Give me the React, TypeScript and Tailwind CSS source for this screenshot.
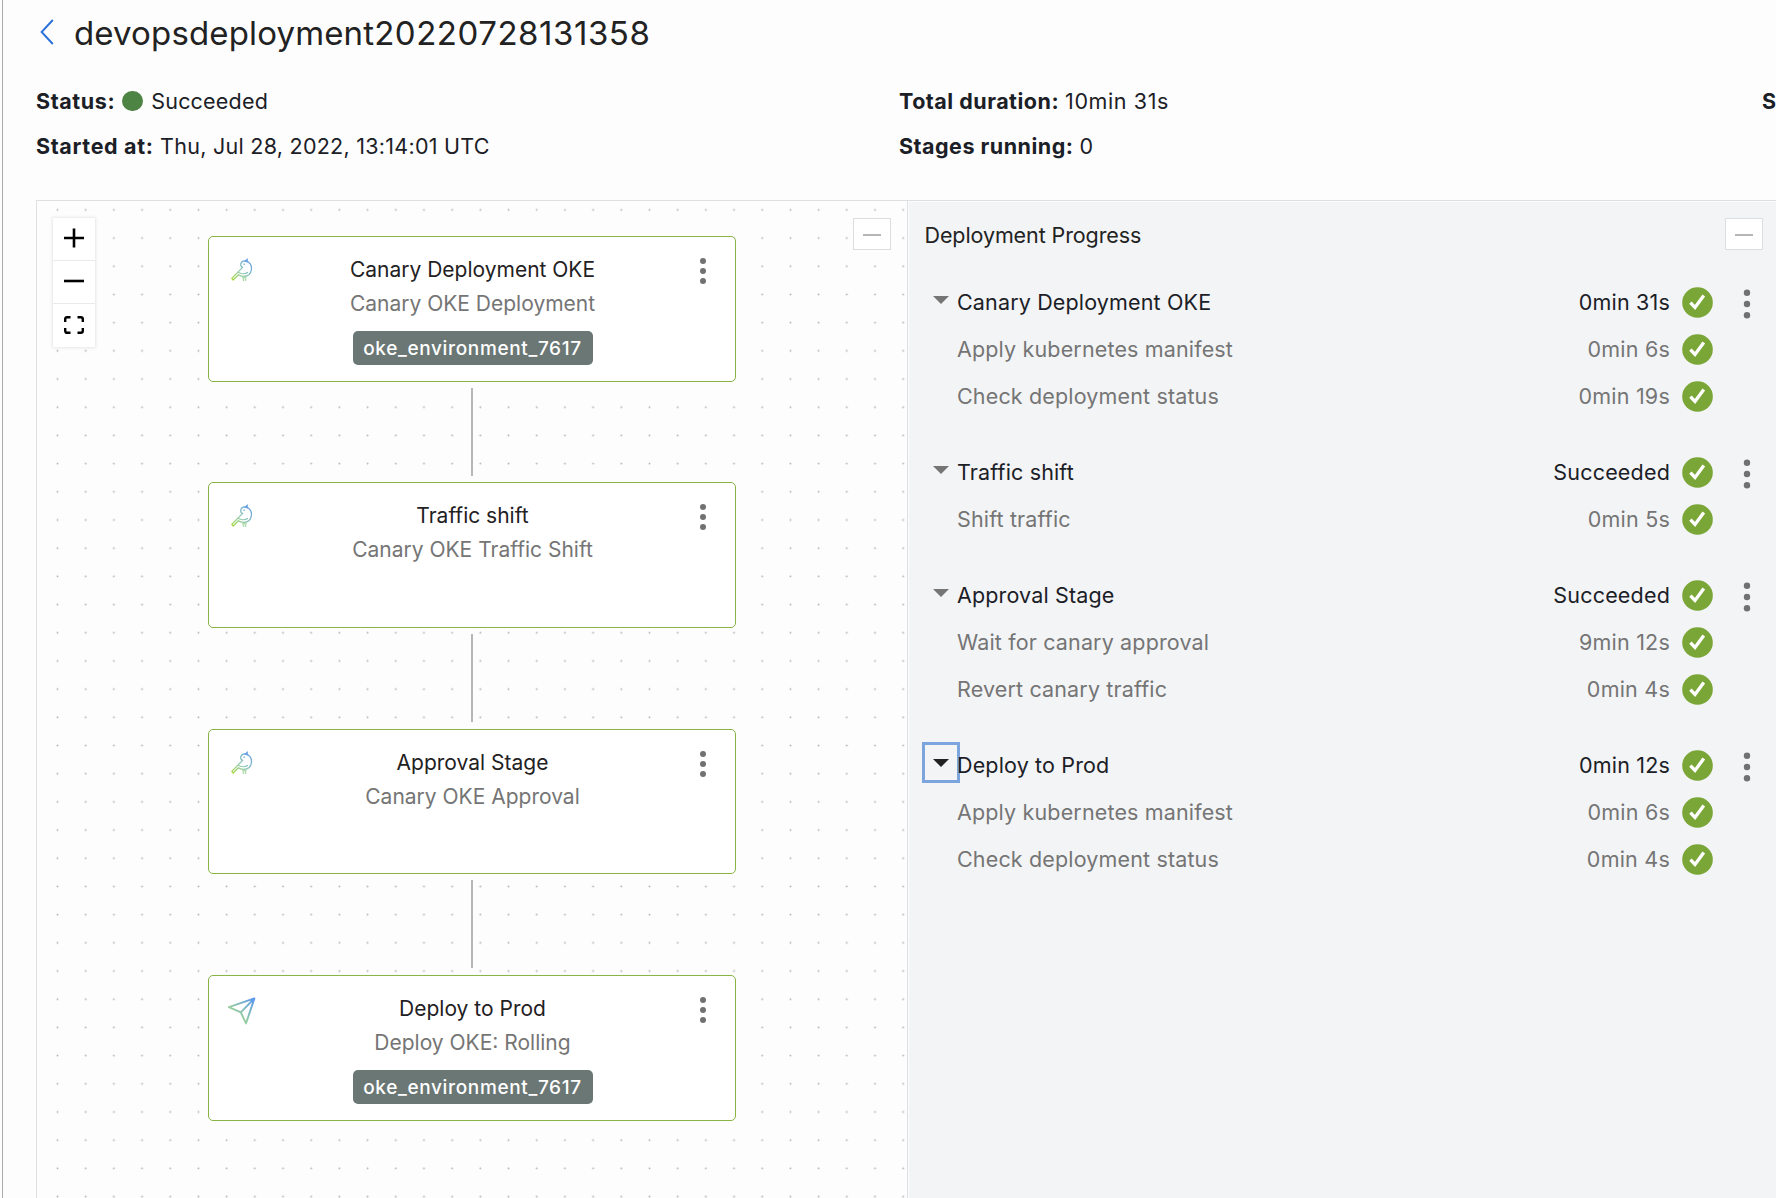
import React from "react";

function PlusIcon() {
  return (
    <svg width="20" height="20" viewBox="0 0 20 20">
      <path d="M10 0.5V19.5M0 10H20" stroke="#000" strokeWidth="2.6" fill="none" />
    </svg>
  );
}

function MinusIcon() {
  return (
    <svg width="20" height="20" viewBox="0 0 20 20">
      <path d="M0 10H20" stroke="#000" strokeWidth="2.6" fill="none" />
    </svg>
  );
}

function FitIcon() {
  return (
    <svg width="20" height="18" viewBox="0 0 20 18">
      <path
        d="M1.2 6V3.2Q1.2 1.2 3.2 1.2H6.5M13.5 1.2H16.8Q18.8 1.2 18.8 3.2V6M18.8 12V14.8Q18.8 16.8 16.8 16.8H13.5M6.5 16.8H3.2Q1.2 16.8 1.2 14.8V12"
        stroke="#000"
        strokeWidth="2.4"
        fill="none"
      />
    </svg>
  );
}

function Kebab({ gap, r }: { gap: number; r: number }) {
  return (
    <svg width="8" height="30" viewBox="0 0 8 30" className="shrink-0">
      {[-1, 0, 1].map((n) => (
        <circle key={n} cx="4" cy={15 + n * gap} r={r} fill="#717171" />
      ))}
    </svg>
  );
}

function BirdIcon() {
  return (
    <svg width="22" height="24" viewBox="0 0 22 24" fill="none">
      <defs>
        <linearGradient id="bird" x1="1" y1="22" x2="19" y2="3" gradientUnits="userSpaceOnUse">
          <stop offset="0" stopColor="#a6d83c" />
          <stop offset="0.45" stopColor="#93cbb0" />
          <stop offset="1" stopColor="#6aa2e6" />
        </linearGradient>
      </defs>
      <path
        d="M11.6 9.4C8.6 8.4 9.2 3 13.6 2.8C18.4 3 21 7 20.4 11.6C19.8 16 16.4 18.4 12.4 18.4C10.2 18.4 8.6 17.8 7.4 16.8L2.2 22L0.8 20.4L11.6 9.4Z"
        stroke="url(#bird)"
        strokeWidth="1.3"
        strokeLinejoin="round"
      />
      <path d="M6.8 13.8C9.8 16.4 14.2 16.4 17 14.2" stroke="url(#bird)" strokeWidth="1.1" />
      <path d="M13 3.2L16.8 0V4.8Z" fill="#6aa2e6" />
      <circle cx="13.2" cy="6.2" r="0.9" fill="#8fc4d8" />
      <path d="M12.4 19V23M14.6 19V23M11.2 19.6H15.6" stroke="#b2dcae" strokeWidth="1.4" />
    </svg>
  );
}

function PlaneIcon() {
  return (
    <svg width="28" height="28" viewBox="0 0 28 28" fill="none">
      <defs>
        <linearGradient id="plane" x1="10" y1="18" x2="26" y2="2" gradientUnits="userSpaceOnUse">
          <stop offset="0" stopColor="#98cfa0" />
          <stop offset="1" stopColor="#5b97ee" />
        </linearGradient>
      </defs>
      <path
        d="M0.9 10.2L26.4 1.4L18 26.4L12.8 15.4ZM12.8 15.4L26.4 1.4"
        stroke="url(#plane)"
        strokeWidth="1.9"
        strokeLinejoin="round"
      />
    </svg>
  );
}

function CheckCircle() {
  return (
    <svg width="31" height="31" viewBox="0 0 31 31" className="shrink-0">
      <circle cx="15.5" cy="15.5" r="15.3" fill="#7aa637" />
      <path d="M8.4 15.6L13 20.4L21.8 8.6" stroke="#fff" strokeWidth="3.3" fill="none" />
    </svg>
  );
}

function DotGrid() {
  return (
    <svg className="absolute inset-0 h-full w-full">
      <defs>
        <pattern id="dots" x="6.4" y="-5.2" width="28.19" height="28.19" patternUnits="userSpaceOnUse">
          <circle cx="14.1" cy="14.1" r="0.95" fill="#b4b4b4" />
        </pattern>
      </defs>
      <rect width="100%" height="100%" fill="url(#dots)" />
    </svg>
  );
}

type Stage = { title: string; sub: string; env?: string; icon: "bird" | "plane" };

const stages: Stage[] = [
  { title: "Canary Deployment OKE", sub: "Canary OKE Deployment", env: "oke_environment_7617", icon: "bird" },
  { title: "Traffic shift", sub: "Canary OKE Traffic Shift", icon: "bird" },
  { title: "Approval Stage", sub: "Canary OKE Approval", icon: "bird" },
  { title: "Deploy to Prod", sub: "Deploy OKE: Rolling", env: "oke_environment_7617", icon: "plane" },
];

function StageCard({ stage }: { stage: Stage }) {
  return (
    <div className="flex h-[145.6px] w-[528px] shrink-0 justify-between rounded-[5px] border border-[#8ab443] bg-white">
      <div className="flex w-[66px] justify-center pt-[21px]">{stage.icon === "bird" ? <BirdIcon /> : <PlaneIcon />}</div>
      <div className="flex flex-col items-center pt-[16px] text-[21px] leading-[34px] text-[#1f2123]">
        <div>{stage.title}</div>
        <div className="text-[#757575]">{stage.sub}</div>
        {stage.env && (
          <div className="mt-[10px] flex h-[34px] w-[240px] items-center justify-center rounded-[5px] bg-[#6b7775] pt-px text-[19px] font-medium tracking-[0.65px] text-white">
            {stage.env}
          </div>
        )}
      </div>
      <div className="flex w-[65px] justify-center pt-[19px]">
        <Kebab gap={10} r={3} />
      </div>
    </div>
  );
}

function CollapseButton() {
  return (
    <button className="flex h-[32px] w-[38px] items-center justify-center border border-[#dcdee0] bg-white pt-px">
      <span className="h-[2px] w-[18px] bg-[#b5b5b5]" />
    </button>
  );
}

type Group = { title: string; time: string; focused?: boolean; steps: [string, string][] };

const groups: Group[] = [
  {
    title: "Canary Deployment OKE",
    time: "0min 31s",
    steps: [
      ["Apply kubernetes manifest", "0min 6s"],
      ["Check deployment status", "0min 19s"],
    ],
  },
  { title: "Traffic shift", time: "Succeeded", steps: [["Shift traffic", "0min 5s"]] },
  {
    title: "Approval Stage",
    time: "Succeeded",
    steps: [
      ["Wait for canary approval", "9min 12s"],
      ["Revert canary traffic", "0min 4s"],
    ],
  },
  {
    title: "Deploy to Prod",
    time: "0min 12s",
    focused: true,
    steps: [
      ["Apply kubernetes manifest", "0min 6s"],
      ["Check deployment status", "0min 4s"],
    ],
  },
];

function ProgressGroup({ group }: { group: Group }) {
  return (
    <div>
      <div className="flex h-[47px] items-center pl-[13px] pr-[25px]">
        <button
          className={
            group.focused
              ? "-mr-[3px] mb-[6px] flex h-[41px] w-[38px] items-center justify-center border-[3px] border-[#7da5dd] text-[#222]"
              : "-mr-[3px] mb-[5px] flex h-[41px] w-[38px] items-center justify-center text-[#757575]"
          }
        >
          <svg width="16" height="8" viewBox="0 0 16 8">
            <path d="M0 0H16L8 8Z" fill="currentColor" />
          </svg>
        </button>
        <div className="tracking-[0.15px]">{group.title}</div>
        <div className="ml-auto mr-[12px] tracking-[0.18px]">{group.time}</div>
        <CheckCircle />
        <div className="ml-[30px] mt-[2px] flex">
          <Kebab gap={11.2} r={3.2} />
        </div>
      </div>
      {group.steps.map(([name, time]) => (
        <div key={name} className="flex h-[47px] items-center pl-[48px] pr-[63px] text-[#757575]">
          <div className="tracking-[0.15px]">{name}</div>
          <div className="ml-auto mr-[12px] tracking-[0.22px]">{time}</div>
          <CheckCircle />
        </div>
      ))}
    </div>
  );
}

export default function App() {
  return (
    <div className="flex h-[1198px] w-[1776px] overflow-hidden bg-[#fdfdfd] font-['Inter',sans-serif] text-[21.5px] text-[#1b2026]">
      <div className="ml-[2px] w-px shrink-0 bg-[#a9abad]" />
      <div className="flex min-w-0 flex-1 flex-col pl-[33px]">
        <header className="h-[200px] shrink-0">
          <div className="flex h-[66px] items-center">
            <svg width="14" height="26" viewBox="0 0 14 26" fill="none" className="mb-[2px] ml-[4px]">
              <path d="M12.8 1L1.6 13L12.8 25" stroke="#2a6fdb" strokeWidth="1.9" />
            </svg>
            <h1 className="ml-[20px] text-[33px] leading-[66px] text-[#222]">
              <span className="tracking-[0.14px]">devopsdeployment</span>
              <span className="tracking-[0.54px]">20220728131358</span>
            </h1>
          </div>
          <div className="grid grid-cols-[863px_863px_1fr] pt-[13px] leading-[45px] whitespace-nowrap">
            <div className="flex items-center">
              <span className="font-bold tracking-[0.6px]">Status:</span>
              <span className="mb-px ml-[7px] h-[20px] w-[21px] rounded-full bg-[#4e8443]" />
              <span className="ml-[8px] tracking-[0.2px]">Succeeded</span>
            </div>
            <div>
              <span className="font-bold tracking-[0.5px]">Total duration:</span>
              <span className="ml-[6px] tracking-[0.6px]">10min 31s</span>
            </div>
            <div className="font-bold">S</div>
            <div>
              <span className="font-bold tracking-[0.65px]">Started at:</span>
              <span className="ml-[6.5px] tracking-[0.27px]">Thu, Jul 28, 2022, 13:14:01 UTC</span>
            </div>
            <div>
              <span className="font-bold tracking-[0.5px]">Stages running:</span>
              <span className="ml-[6px]">0</span>
            </div>
          </div>
        </header>

        <main className="flex min-h-0 flex-1 border-l border-t border-[#dddfe3]">
          <section className="relative flex w-[870px] shrink-0 justify-between overflow-hidden">
            <DotGrid />
            <div className="relative ml-[16px] mt-[17px] flex h-[129px] w-[42px] flex-col divide-y divide-[#eaeaea] bg-white shadow-[0_0_3px_1px_rgba(0,0,0,0.09)]">
              <button className="flex flex-1 items-center justify-center pb-px">
                <PlusIcon />
              </button>
              <button className="flex flex-1 items-center justify-center pb-[2px]">
                <MinusIcon />
              </button>
              <button className="flex flex-1 items-center justify-center pb-[2px]">
                <FitIcon />
              </button>
            </div>
            <div className="relative -ml-[4px] flex flex-col items-center pt-[35px]">
              {stages.map((stage, i) => (
                <React.Fragment key={stage.title}>
                  {i > 0 && <div className="mb-[6.8px] mt-[6px] h-[88px] w-[2px] shrink-0 bg-[#b6b6ba]" />}
                  <StageCard stage={stage} />
                </React.Fragment>
              ))}
            </div>
            <div className="relative mr-[16px] mt-[17px]">
              <CollapseButton />
            </div>
          </section>

          <section className="min-w-0 flex-1 border-l border-[#dddfe3] pl-px pt-px">
            <div className="h-full bg-[#f3f4f6]">
              <div className="flex h-[51px] justify-between pl-[15.5px] pr-[13px] pt-[16px]">
                <h2 className="leading-[34px] tracking-[-0.1px] text-[#222]">Deployment Progress</h2>
                <CollapseButton />
              </div>
              <div className="mt-[26px] flex flex-col gap-[29px]">
                {groups.map((group) => (
                  <ProgressGroup key={group.title} group={group} />
                ))}
              </div>
            </div>
          </section>
        </main>
      </div>
    </div>
  );
}
